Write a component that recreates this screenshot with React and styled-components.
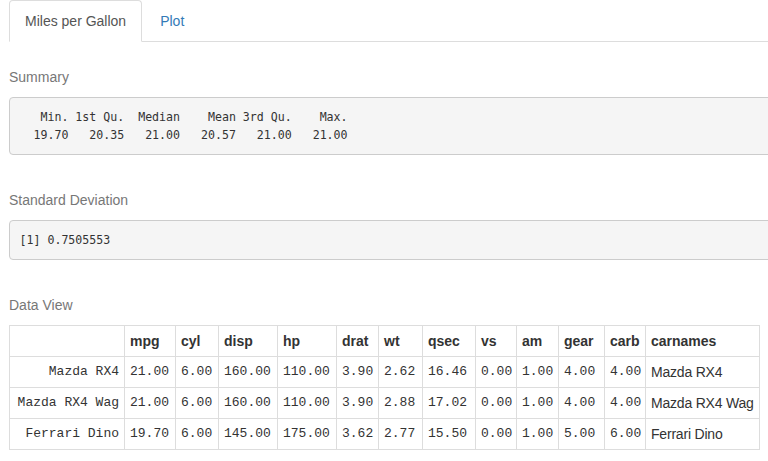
import React, { useState } from 'react';
import styled, { createGlobalStyle } from 'styled-components';

const GlobalStyle = createGlobalStyle`
  html, body {
    margin: 0;
    padding: 0;
    overflow: hidden;
    background: #fff;
  }
  body {
    font-family: "Liberation Sans", Arial, sans-serif;
    font-size: 14px;
    line-height: 1.42857;
    color: #333;
  }
`;

const Page = styled.div`
  width: 820px;
  padding-left: 9px;
`;

const Tabs = styled.ul`
  display: flex;
  list-style: none;
  margin: 0;
  padding: 0;
  border-bottom: 1px solid #ddd;
`;

const TabItem = styled.li`
  margin-right: 2px;
  margin-bottom: -1px;
`;

const TabLink = styled.a`
  display: block;
  padding: 10px 15px;
  line-height: 20px;
  border: 1px solid ${(p) => (p.active ? '#ddd' : 'transparent')};
  border-bottom-color: transparent;
  border-radius: 4px 4px 0 0;
  background: ${(p) => (p.active ? '#fff' : 'transparent')};
  color: ${(p) => (p.active ? '#555' : '#337ab7')};
  cursor: pointer;
  text-decoration: none;
`;

const Label = styled.div`
  margin-top: ${(p) => p.top}px;
  margin-bottom: ${(p) => p.bottom}px;
  color: #777;
  font-size: 14px;
  line-height: 20px;
`;

const Pre = styled.pre`
  margin: 0;
  padding: 9.5px;
  background: #f5f5f5;
  border: 1px solid #ccc;
  border-radius: 4px;
  font-family: "DejaVu Sans Mono", "Liberation Mono", monospace;
  font-size: 11.6px;
  line-height: 18.5px;
  color: #333;
  white-space: pre;
`;

const Table = styled.table`
  border-collapse: collapse;
  table-layout: fixed;
  width: 750px;
  border: 1px solid #ddd;
`;

const Th = styled.th`
  border: 1px solid #ddd;
  padding: 5px;
  line-height: 20px;
  text-align: left;
  font-weight: bold;
  font-size: 14px;
  color: #333;
  white-space: nowrap;
`;

const Td = styled.td`
  border: 1px solid #ddd;
  padding: 5px;
  line-height: 20px;
  text-align: ${(p) => (p.right ? 'right' : 'left')};
  font-family: ${(p) =>
    p.sans ? '"Liberation Sans", Arial, sans-serif' : '"Liberation Mono", "Courier New", monospace'};
  font-size: ${(p) => (p.sans ? 14 : 13)}px;
  letter-spacing: ${(p) => (p.sans ? '-0.2px' : '0')};
  color: #333;
  white-space: nowrap;
  overflow: hidden;
`;

const columns = [
  { key: '', w: 115 },
  { key: 'mpg', w: 51 },
  { key: 'cyl', w: 43 },
  { key: 'disp', w: 59 },
  { key: 'hp', w: 59 },
  { key: 'drat', w: 42 },
  { key: 'wt', w: 44 },
  { key: 'qsec', w: 53 },
  { key: 'vs', w: 41 },
  { key: 'am', w: 42 },
  { key: 'gear', w: 46 },
  { key: 'carb', w: 41 },
  { key: 'carnames', w: 114 },
];

const rows = [
  ['Mazda RX4', '21.00', '6.00', '160.00', '110.00', '3.90', '2.62', '16.46', '0.00', '1.00', '4.00', '4.00', 'Mazda RX4'],
  ['Mazda RX4 Wag', '21.00', '6.00', '160.00', '110.00', '3.90', '2.88', '17.02', '0.00', '1.00', '4.00', '4.00', 'Mazda RX4 Wag'],
  ['Ferrari Dino', '19.70', '6.00', '145.00', '175.00', '3.62', '2.77', '15.50', '0.00', '1.00', '5.00', '6.00', 'Ferrari Dino'],
];

const summary = `   Min. 1st Qu.  Median    Mean 3rd Qu.    Max. 
  19.70   20.35   21.00   20.57   21.00   21.00 `;

const App = () => {
  const [tab, setTab] = useState('mpg');

  return (
    <Page>
      <GlobalStyle />
      <Tabs>
        <TabItem>
          <TabLink active={tab === 'mpg'} onClick={() => setTab('mpg')}>Miles per Gallon</TabLink>
        </TabItem>
        <TabItem>
          <TabLink active={tab === 'plot'} onClick={() => setTab('plot')}>Plot</TabLink>
        </TabItem>
      </Tabs>

      <Label top={25} bottom={10}>Summary</Label>
      <Pre>{summary}</Pre>

      <Label top={35} bottom={10}>Standard Deviation</Label>
      <Pre>[1] 0.7505553</Pre>

      <Label top={35} bottom={10}>Data View</Label>
      <Table>
        <colgroup>
          {columns.map((c, i) => (
            <col key={i} style={{ width: c.w }} />
          ))}
        </colgroup>
        <thead>
          <tr>
            {columns.map((c, i) => (
              <Th key={i}>{c.key}</Th>
            ))}
          </tr>
        </thead>
        <tbody>
          {rows.map((r) => (
            <tr key={r[0]}>
              {r.map((v, i) => (
                <Td key={i} right={i === 0} sans={i === r.length - 1}>{v}</Td>
              ))}
            </tr>
          ))}
        </tbody>
      </Table>
    </Page>
  );
};

export default App;
